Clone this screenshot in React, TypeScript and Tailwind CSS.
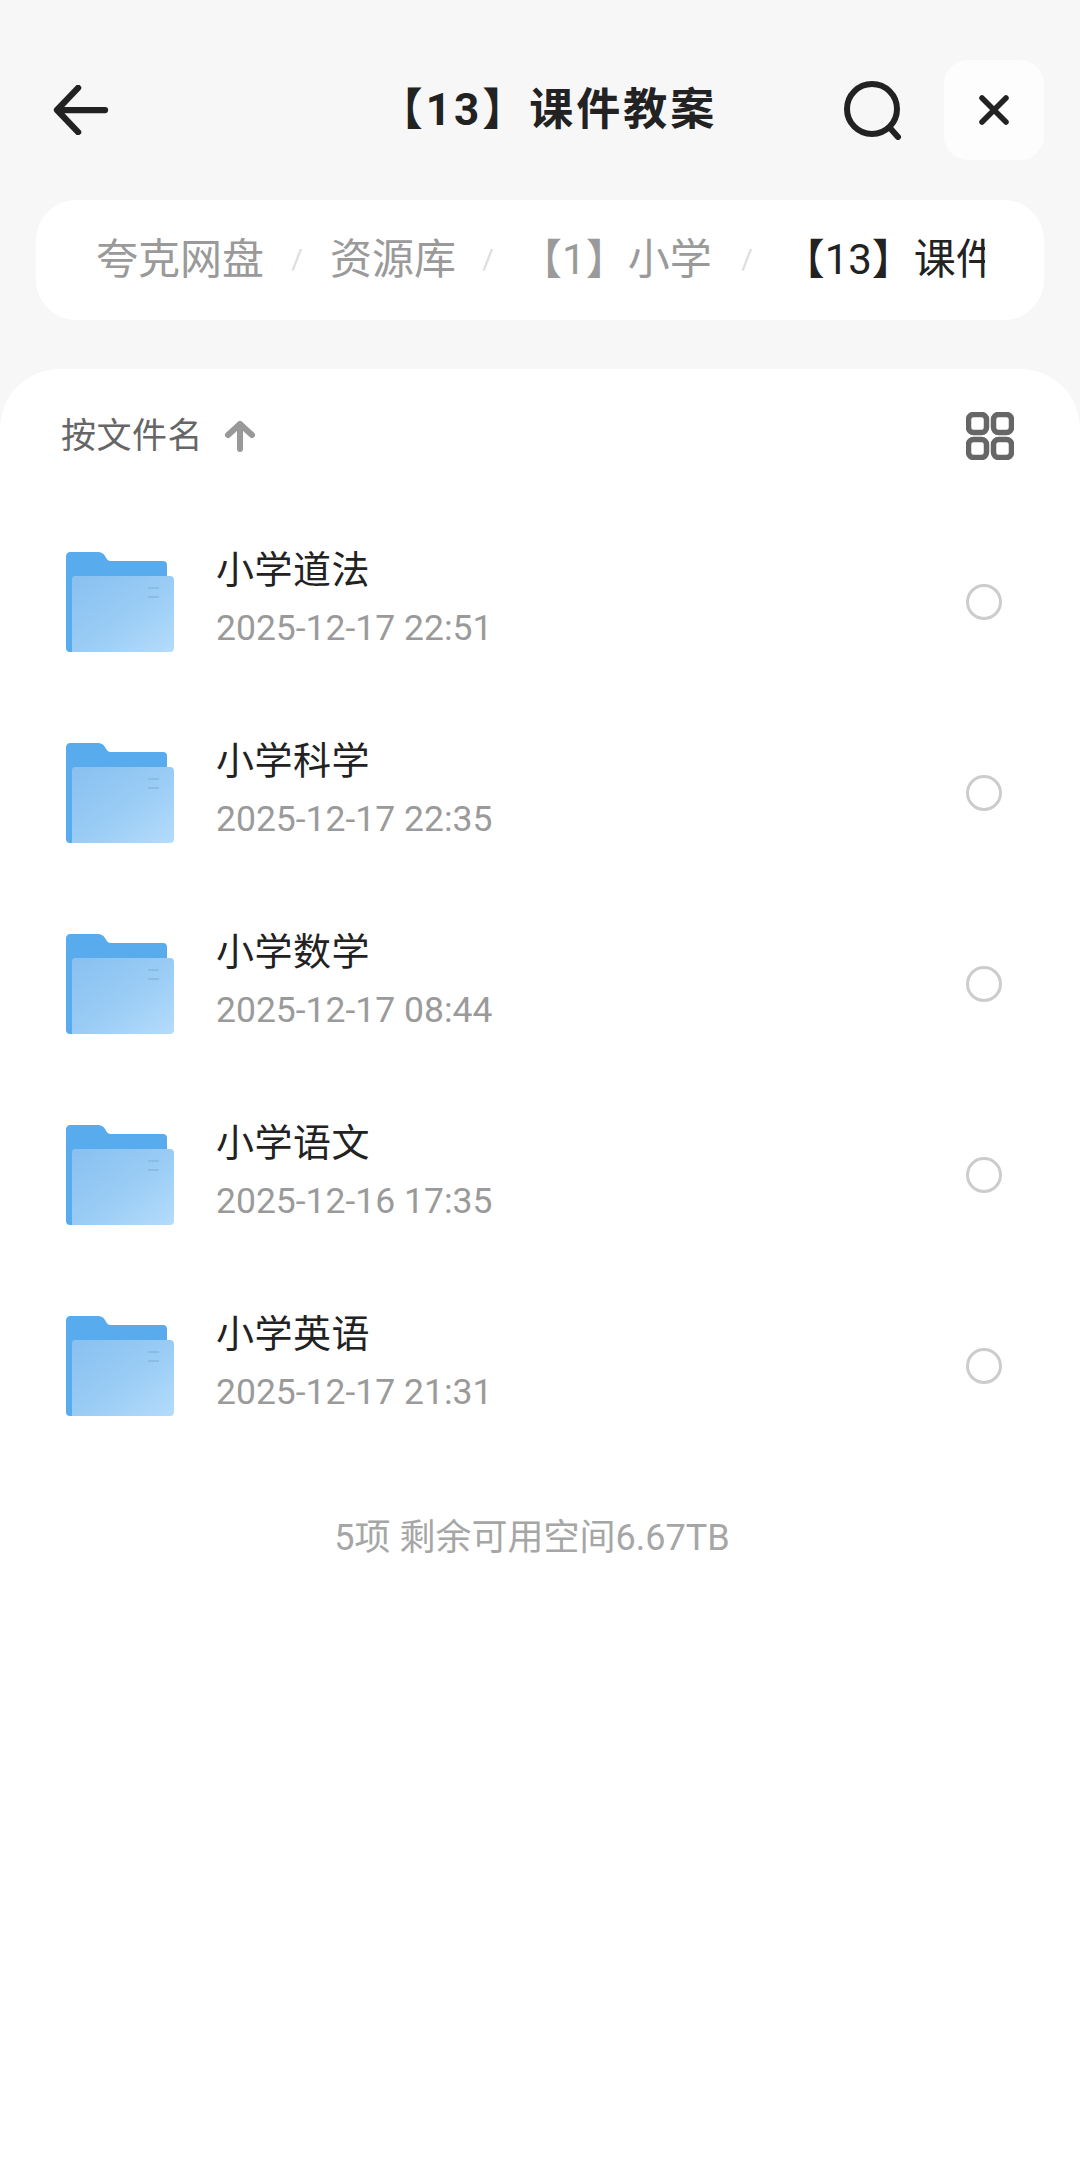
import React from 'react';

const files = [
  { name: '小学道法', time: '2025-12-17 22:51' },
  { name: '小学科学', time: '2025-12-17 22:35' },
  { name: '小学数学', time: '2025-12-17 08:44' },
  { name: '小学语文', time: '2025-12-16 17:35' },
  { name: '小学英语', time: '2025-12-17 21:31' },
];

const crumbs = [
  { label: '夸克网盘', sep: 'w-[66px]' },
  { label: '资源库', sep: 'w-[64px]' },
  { label: '【1】小学', sep: 'w-[71px]' },
];

function FolderIcon({ id }: { id: number }) {
  return (
    <svg className="w-[108px] h-[100px] shrink-0 mt-[1px]" viewBox="0 0 108 100" fill="none">
      <defs>
        <linearGradient id={`front-${id}`} x1="0" y1="0" x2="1" y2="1">
          <stop offset="0" stopColor="#88c0f0" />
          <stop offset="0.55" stopColor="#9bcdf5" />
          <stop offset="1" stopColor="#b4dcfd" />
        </linearGradient>
      </defs>
      <path
        d="M4 0H32C35 0 37 1 39 4C40.500 7 42 9 45 9H97C100 9 101 11 101 13V30H6V100H4C2 100 0 99 0 96V4C0 2 2 0 4 0Z"
        fill="#58abec"
      />
      <path
        d="M9 24H104C106.500 24 108 25.500 108 28V96C108 98.500 106.500 100 104 100H6V27C6 25.500 7 24 9 24Z"
        fill={`url(#front-${id})`}
      />
      <path d="M82 36H93M82 45H93" stroke="#8abce4" strokeWidth="2" />
    </svg>
  );
}

export default function App() {
  return (
    <div
      className="w-[1080px] h-[2169px] bg-[#f7f7f7] overflow-hidden flex flex-col"
      style={{ fontFamily: 'Roboto, "Noto Sans CJK SC", sans-serif' }}
    >
      {/* Header */}
      <div className="h-[100px] mt-[60px] grid grid-cols-[1fr_auto_1fr] items-center pl-[52px] pr-[36px]">
        <svg className="w-[58px] h-[50px]" viewBox="0 0 58 52" fill="none" stroke="#222222" strokeWidth="6.500" strokeLinecap="round" strokeLinejoin="round">
          <path d="M54 26H4M26 3L4 26L26 49" />
        </svg>
        <div className="text-[44px] font-bold text-[#222222] tracking-[3px] leading-none">【13】课件教案</div>
        <div className="flex items-center justify-end gap-[41px]">
          <svg className="w-[60px] h-[60px]" viewBox="0 0 60 60" fill="none" stroke="#222222" strokeWidth="6" strokeLinecap="round">
            <circle cx="29" cy="29" r="25" />
            <path d="M47 48L55 57" />
          </svg>
          <div className="w-[100px] h-[100px] bg-[#fdfdfd] rounded-[24px] flex items-center justify-center">
            <svg className="w-[32px] h-[32px]" viewBox="0 0 32 32" fill="none" stroke="#222222" strokeWidth="5.500" strokeLinecap="round">
              <path d="M4 4L28 28M28 4L4 28" />
            </svg>
          </div>
        </div>
      </div>

      {/* Breadcrumb */}
      <div className="mt-[40px] mx-[36px] h-[120px] bg-white rounded-[40px] pl-[60px] pr-[59px] flex items-center">
        <div className="w-full overflow-hidden flex items-center whitespace-nowrap text-[42px] leading-[56px] text-[#9a9a9a]">
          {crumbs.map((c) => (
            <React.Fragment key={c.label}>
              <span className="shrink-0">{c.label}</span>
              <span className={`${c.sep} shrink-0 text-center text-[28px] text-[#dddddd]`}>/</span>
            </React.Fragment>
          ))}
          <span className="shrink-0 text-[#222222]">【13】课件教案</span>
        </div>
      </div>

      {/* File sheet */}
      <div className="mt-[49px] flex-1 bg-white rounded-t-[60px]">
        <div className="h-[134px] pl-[61px] pr-[66px] flex items-center justify-between">
          <div className="flex items-center gap-[21px]">
            <span className="text-[35px] leading-none text-[#666666] tracking-[0.5px]">按文件名</span>
            <svg className="w-[32px] h-[32px]" viewBox="0 0 32 32" fill="none" stroke="#999999" strokeWidth="6" strokeLinecap="round" strokeLinejoin="round">
              <path d="M16 29V4M4 15L16 4L28 15" />
            </svg>
          </div>
          <svg className="w-[48px] h-[48px]" viewBox="0 0 48 48" fill="none" stroke="#666666" strokeWidth="5.500">
            <rect x="2.500" y="2.500" width="18" height="18" rx="5" />
            <rect x="27.500" y="2.500" width="18" height="18" rx="5" />
            <rect x="2.500" y="27.500" width="18" height="18" rx="5" />
            <rect x="27.500" y="27.500" width="18" height="18" rx="5" />
          </svg>
        </div>

        <div className="mt-[3px]">
          {files.map((f, i) => (
            <div key={f.name} className="h-[191px] pl-[66px] pr-[78px] flex items-center">
              <FolderIcon id={i} />
              <div className="ml-[42px] flex-1 mb-[5px]">
                <div className="text-[38px] leading-[44px] text-[#222222] tracking-[0.5px]">{f.name}</div>
                <div className="mt-[14px] text-[35.500px] leading-[44px] text-[#9a9a9a]">{f.time}</div>
              </div>
              <div className="w-[36px] h-[36px] rounded-full border-[3px] border-[#cccccc]" />
            </div>
          ))}
        </div>

        <div className="mt-[55px] pr-[16px] text-center text-[36px] leading-[44px] text-[#a6a6a6]">5项 剩余可用空间6.67TB</div>
      </div>
    </div>
  );
}
